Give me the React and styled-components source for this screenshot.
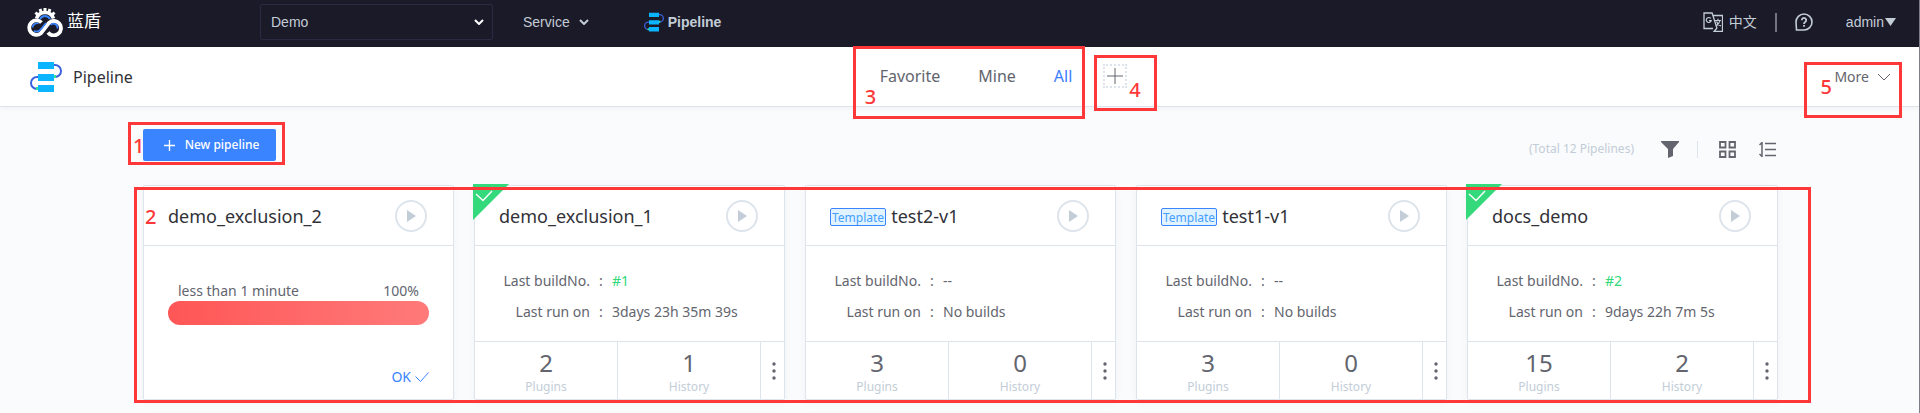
import React from "react";
import styled, { createGlobalStyle } from "styled-components";

const UI = '"Noto Sans", "Noto Sans CJK SC", sans-serif';
const NAV = '"Liberation Sans", "Noto Sans CJK SC", sans-serif';

const GlobalStyle = createGlobalStyle`
  *, *::before, *::after { box-sizing: border-box; }
  body { margin: 0; background: #fafbfd; color: #63656e; font: 14px/20px ${UI}; }
  button, select { font: inherit; color: inherit; background: none; border: 0; padding: 0; cursor: pointer; }
  a { color: inherit; text-decoration: none; }
  svg { display: block; flex: none; }
`;

const Page = styled.div`
  border-right: 1px solid #7c7e88;
  overflow: hidden;
`;

const TopBar = styled.header`
  display: flex;
  align-items: center;
  height: 47px;
  margin-right: -1px;
  padding: 0 24px 3px 27px;
  background: #1b1a29;
  color: #c3cdd7;
  font: 14px/20px ${NAV};
`;

const Brand = styled.a`
  display: flex;
  align-items: center;
  gap: 4px;
  width: 233px;
  color: #fff;
  font-size: 17px;
`;

const ProjectPicker = styled.label`
  display: grid;
  align-items: center;
  width: 233px;
  height: 36px;
  border: 1px solid #2a2a42;
  border-radius: 2px;
  select, svg { grid-area: 1 / 1; }
  svg { justify-self: end; margin-right: 8px; pointer-events: none; color: #fff; }
`;

const ProjectSelect = styled.select`
  appearance: none;
  width: 100%;
  height: 100%;
  padding: 0 10px;
`;

const NavButton = styled.button`
  display: flex;
  align-items: center;
  gap: 9px;
  margin-left: 30px;
`;

const NavLink = styled.a`
  display: flex;
  align-items: center;
  gap: 4px;
  margin-left: 55px;
  font-weight: bold;
`;

const TopTools = styled.div`
  display: flex;
  align-items: center;
  margin-left: auto;
`;

const ToolButton = styled.button`
  display: flex;
  align-items: center;
  gap: ${(p) => p.$gap || 0}px;
`;

const Rule = styled.span`
  width: ${(p) => p.$width || 1}px;
  height: ${(p) => p.$height}px;
  margin: ${(p) => p.$margin};
  background: ${(p) => p.$color};
`;

const SubHeader = styled.div`
  display: grid;
  grid-template-columns: 1fr auto 1fr;
  align-items: center;
  height: 60px;
  padding: 0 28px 0 30px;
  background: #fff;
  border-bottom: 1px solid #dde4eb;
  box-shadow: 0 2px 5px rgba(0, 0, 0, 0.04);
`;

const Title = styled.h1`
  display: flex;
  align-items: center;
  gap: 11px;
  margin: 0;
  color: #313238;
  font-size: 16px;
  font-weight: 400;
`;

const ViewBar = styled.nav`
  display: flex;
  align-items: center;
  gap: 31px;
  padding: 0 0 2px 86px;
`;

const Views = styled.div`
  position: relative;
  display: flex;
  gap: 38px;
  font-size: 16px;
`;

const ViewLink = styled.a`
  color: ${(p) => (p.$active ? "#3c7cff" : "inherit")};
`;

const AddView = styled.button`
  position: relative;
  display: grid;
  place-items: center;
  width: 24px;
  height: 24px;
  border: 2px dotted #dde4eb;
`;

const MoreButton = styled.button`
  position: relative;
  justify-self: end;
  display: flex;
  align-items: center;
  gap: 8px;
`;

const Content = styled.main`
  padding: 22px 141px 13px 143px;
`;

const Toolbar = styled.div`
  display: flex;
  align-items: center;
  justify-content: space-between;
`;

const CreateButton = styled.button`
  position: relative;
  display: flex;
  align-items: center;
  justify-content: center;
  gap: 10px;
  width: 133px;
  height: 32px;
  padding-left: 4px;
  border-radius: 2px;
  background: #3a84ff;
  color: #fff;
  font-size: 12px;
  font-weight: 500;
`;

const ListTools = styled.div`
  display: flex;
  align-items: center;
  padding: 8px 2px 0 0;
`;

const Total = styled.span`
  margin-right: 27px;
  color: #c3cdd7;
  font-size: 12px;
`;

const Cards = styled.div`
  position: relative;
  display: grid;
  grid-template-columns: repeat(auto-fill, 311px);
  gap: 20px;
  margin-top: 24px;
`;

const Card = styled.article`
  position: relative;
  display: flex;
  flex-direction: column;
  height: 215px;
  background: #fff;
  border: 1px solid #dde4eb;
  border-radius: 2px;
  box-shadow: 0 3px 8px rgba(0, 0, 0, 0.04);
`;

const CardHead = styled.div`
  display: flex;
  align-items: center;
  gap: 5px;
  height: 60px;
  padding: 0 26px 0 24px;
  border-bottom: 1px solid #dde4eb;
`;

const CardTitle = styled.h2`
  flex: 1;
  margin: 0;
  color: #313238;
  font-size: 18px;
  line-height: 24px;
  font-weight: 400;
`;

const TemplateTag = styled.span`
  height: 18px;
  margin-top: 2px;
  padding: 0 1px;
  border: 1px solid #3a84ff;
  border-radius: 2px;
  background: #e1f3ff;
  color: #459fff;
  font-size: 12px;
  line-height: 18px;
`;

const PlayButton = styled.button`
  display: grid;
  place-items: center;
  width: 32px;
  height: 32px;
  border: 2px solid #dde4eb;
  border-radius: 50%;
`;

const Corner = styled.span`
  position: absolute;
  top: -2px;
  left: -2px;
`;

const Details = styled.dl`
  flex: 1;
  display: grid;
  grid-template-columns: 115px 1fr;
  align-content: center;
  row-gap: 11px;
  margin: 0;
  padding-top: 5px;
  dt { text-align: right; }
  dd { margin: 0; }
`;

const Value = styled.dd`
  display: flex;
  color: ${(p) => (p.$link ? "#30d878" : "inherit")};
  &::before { content: ":"; width: 22px; padding-left: 9px; color: #63656e; }
`;

const CardFoot = styled.div`
  display: grid;
  grid-template-columns: 1fr 1fr 23px;
  height: 58px;
  border-top: 1px solid #dde4eb;
`;

const Stat = styled.a`
  display: flex;
  flex-direction: column;
  align-items: center;
  padding-top: 7px;
  border-right: 1px solid #dde4eb;
  font-size: 12px;
  line-height: 20px;
  color: #c3cdd7;
  strong { font-size: 24px; line-height: 28px; font-weight: 400; color: #63656e; }
`;

const MenuButton = styled.button`
  display: grid;
  place-items: center;
  padding-left: 2px;
`;

const Running = styled.div`
  flex: 1;
  display: flex;
  flex-direction: column;
  padding: 35px 24px 12px;
`;

const ProgressInfo = styled.div`
  display: flex;
  justify-content: space-between;
  padding: 0 10px;
`;

const Progress = styled.div`
  height: 24px;
  border-radius: 12px;
  background: linear-gradient(90deg, #ff5656, #ff7a7a);
`;

const OkButton = styled.button`
  display: flex;
  align-items: center;
  gap: 4px;
  margin: auto 0 0 auto;
  color: #3a84ff;
`;

const Callout = styled.span`
  position: absolute;
  z-index: 2;
  inset: ${(p) => p.$inset};
  border: 3px solid #fe3838;
  color: #fe3838;
  font: 500 20px/24px ${UI};
  text-align: left;
  pointer-events: none;
`;

const CalloutNumber = styled.span`
  position: absolute;
  inset: ${(p) => p.$inset};
`;

const Mark = ({ n, box, at }) => (
  <Callout $inset={box}>
    <CalloutNumber $inset={at}>{n}</CalloutNumber>
  </Callout>
);

const Logo = () => (
  <svg width="36" height="30" viewBox="0 0 36 30" fill="none" aria-hidden="true">
    <path d="M9.500 11.500a9 9 0 0 1 17 0" stroke="#fff" strokeWidth="3.600" />
    <path d="M8.500 5.500l3 3M13 2l1.500 4M18 1v4M23 2l-1.500 4M27.500 5.500l-3 3" stroke="#fff" strokeWidth="3" />
    <path d="M13 12a5.600 5.600 0 0 1 10 0" stroke="#3a84ff" strokeWidth="2" />
    <path d="M14.500 15.500A7.200 7.200 0 1 0 14 26.200L22 15.800A7.200 7.200 0 1 1 21 25.500" stroke="#fff" strokeWidth="3.800" />
    <path d="M5.500 20.500A4.600 4.600 0 0 1 11.500 16.500M7 23.800C10 26 12.500 24 14.500 21.500L19 16M23.500 18C26.500 15 31 17.500 30.500 21.500" stroke="#3a84ff" strokeWidth="1.700" />
  </svg>
);

const PipelineIcon = ({ size }) => (
  <svg width={size} height={size} viewBox="0 0 32 32" aria-hidden="true">
    <g fill="none" stroke="#3a62e0" strokeWidth="2">
      <path d="M23 4h2a5.500 5.500 0 0 1 0 12h-2M9 16H7a5.500 5.500 0 0 0 0 12h2" />
    </g>
    <path d="M24 14h2v3h-2zM6 26h3v3H6z" fill="#30e890" />
    <path d="M8 1h16v7H8zM8 13h16v7H8zM8 24h16v7H8z" fill="#0ab4ff" />
  </svg>
);

const Chevron = ({ w = 10, h = 6, stroke = 2 }) => (
  <svg width={w} height={h} viewBox={`0 0 ${w} ${h}`} fill="none" stroke="currentColor" strokeWidth={stroke} aria-hidden="true">
    <path d={`M1 1L${w / 2} ${h - 1}L${w - 1} 1`} />
  </svg>
);

const LanguageIcon = () => (
  <svg width="20" height="20" viewBox="0 0 20 20" fill="none" stroke="currentColor" aria-hidden="true">
    <path d="M9.500 1H1v15.500h9M9 .8l5 15.500M10 3.500h9.500V19.500H11l3-3.500" strokeWidth="1.300" />
    <path d="M7.800 6.500a2.500 2.500 0 1 0 .4 2.200H6M12 8.500h6M15 6.800v1.700M17 8.500c-.5 2.500-2 4-4 5.500M13.500 9.500c.7 2 2 3.500 4.500 4.500" strokeWidth="1.200" />
  </svg>
);

const HelpIcon = () => (
  <svg width="18" height="18" viewBox="0 0 18 18" fill="none" stroke="currentColor" aria-hidden="true">
    <path d="M1 9a8 8 0 1 1 8 8H1.500z" strokeWidth="1.600" />
    <path d="M6.800 7.200a2.200 2.200 0 1 1 3.400 1.800c-.8.5-1.200.9-1.200 1.900M9 12v1.800" strokeWidth="1.800" />
  </svg>
);

const FilterIcon = () => (
  <svg width="18" height="17" viewBox="0 0 18 17" aria-hidden="true">
    <path d="M0 0h18v1l-6 7v7l-5 2V8L0 1z" fill="#63656e" />
  </svg>
);

const GridIcon = () => (
  <svg width="17" height="17" viewBox="0 0 17 17" fill="none" stroke="#63656e" strokeWidth="1.800" aria-hidden="true">
    <path d="M1 1h5.500v5.500H1zM10.500 1H16v5.500h-5.500zM1 10.500h5.500V16H1zM10.500 10.500H16V16h-5.500z" />
  </svg>
);

const SortIcon = () => (
  <svg width="17" height="17" viewBox="0 0 17 17" fill="none" stroke="#63656e" strokeWidth="1.500" aria-hidden="true">
    <path d="M3 1v15M.500 4L3 1.500M.500 13L3 15.500M6 2.500h11M6 8.500h11M6 14.500h11" />
  </svg>
);

const CheckIcon = ({ w = 14, h = 10, color = "currentColor" }) => (
  <svg width={w} height={h} viewBox="0 0 14 10" fill="none" stroke={color} aria-hidden="true">
    <path d="M.500 4.500l5 5L13.500.500" />
  </svg>
);

const PlusIcon = ({ size, stroke = 1 }) => (
  <svg width={size} height={size} viewBox="0 0 16 16" fill="none" stroke="currentColor" strokeWidth={stroke} aria-hidden="true">
    <path d="M8 0v16M0 8h16" />
  </svg>
);

const pipelines = [
  { name: "demo_exclusion_2", running: true },
  { name: "demo_exclusion_1", ok: true, build: "#1", last: "3days 23h 35m 39s", plugins: 2, history: 1 },
  { name: "test2-v1", template: true, build: "--", last: "No builds", plugins: 3, history: 0 },
  { name: "test1-v1", template: true, build: "--", last: "No builds", plugins: 3, history: 0 },
  { name: "docs_demo", ok: true, build: "#2", last: "9days 22h 7m 5s", plugins: 15, history: 2 },
];

const PipelineCard = ({ p }) => (
  <Card>
    {p.ok && (
      <Corner>
        <svg width="36" height="36" viewBox="0 0 36 36" aria-hidden="true">
          <path d="M0 0h36L0 36z" fill="#34d97b" />
          <path d="M3 10l7 6.500L19 7" fill="none" stroke="#fff" strokeWidth="1.400" />
        </svg>
      </Corner>
    )}
    <CardHead>
      {p.template && <TemplateTag>Template</TemplateTag>}
      <CardTitle>{p.name}</CardTitle>
      <PlayButton aria-label={`Run ${p.name}`}>
        <svg width="9" height="12" viewBox="0 0 9 12" aria-hidden="true"><path d="M0 0l9 6-9 6z" fill="#c3cdd7" /></svg>
      </PlayButton>
    </CardHead>
    {p.running ? (
      <Running>
        <ProgressInfo><span>less than 1 minute</span><span>100%</span></ProgressInfo>
        <Progress role="progressbar" aria-valuenow={100} aria-label="Build progress" />
        <OkButton>OK <CheckIcon /></OkButton>
      </Running>
    ) : (
      <>
        <Details>
          <dt>Last buildNo.</dt><Value $link={p.build !== "--"}>{p.build}</Value>
          <dt>Last run on</dt><Value>{p.last}</Value>
        </Details>
        <CardFoot>
          <Stat href="#plugins"><strong>{p.plugins}</strong>Plugins</Stat>
          <Stat href="#history"><strong>{p.history}</strong>History</Stat>
          <MenuButton aria-label="Pipeline menu">
            <svg width="4" height="18" viewBox="0 0 4 18" fill="#63656e" aria-hidden="true">
              <circle cx="2" cy="2" r="1.700" /><circle cx="2" cy="9" r="1.700" /><circle cx="2" cy="16" r="1.700" />
            </svg>
          </MenuButton>
        </CardFoot>
      </>
    )}
  </Card>
);

export default function App() {
  return (
    <Page>
      <GlobalStyle />
      <TopBar>
        <Brand href="#home"><Logo />蓝盾</Brand>
        <ProjectPicker>
          <ProjectSelect aria-label="Project"><option>Demo</option></ProjectSelect>
          <Chevron />
        </ProjectPicker>
        <NavButton>Service <Chevron /></NavButton>
        <NavLink href="#pipeline"><PipelineIcon size={20} />Pipeline</NavLink>
        <TopTools>
          <ToolButton $gap={6}><LanguageIcon />中文</ToolButton>
          <Rule $height={19} $margin="0 18px" $color="#73757f" $width={2} />
          <ToolButton aria-label="Help"><HelpIcon /></ToolButton>
          <Rule $height={0} $margin="0 16px" $color="transparent" />
          <ToolButton $gap={1}>
            admin
            <svg width="11" height="8" viewBox="0 0 11 8" aria-hidden="true"><path d="M0 0h11L5.500 8z" fill="currentColor" /></svg>
          </ToolButton>
        </TopTools>
      </TopBar>
      <SubHeader>
        <Title><PipelineIcon size={32} />Pipeline</Title>
        <ViewBar>
          <Views>
            <ViewLink href="#favorite">Favorite</ViewLink>
            <ViewLink href="#mine">Mine</ViewLink>
            <ViewLink href="#all" $active>All</ViewLink>
            <Mark n="3" box="-20px -13px -33px -27px" at="36px auto auto 9px" />
          </Views>
          <AddView aria-label="Add view">
            <PlusIcon size={16} />
            <Mark n="4" box="-11px -32px -25px -11px" at="20px auto auto 32px" />
          </AddView>
        </ViewBar>
        <MoreButton>
          More <Chevron w={14} h={8} stroke={1} />
          <Mark n="5" box="-5px -11px -31px -30px" at="10px auto auto 13px" />
        </MoreButton>
      </SubHeader>
      <Content>
        <Toolbar>
          <CreateButton>
            <PlusIcon size={11} stroke={2} />New pipeline
            <Mark n="1" box="-7px -9px -4px -15px" at="9px auto auto 2px" />
          </CreateButton>
          <ListTools>
            <Total>(Total 12 Pipelines)</Total>
            <ToolButton aria-label="Filter"><FilterIcon /></ToolButton>
            <Rule $height={17} $margin="0 21px 0 18px" $color="#dde4eb" />
            <ToolButton aria-label="Card view"><GridIcon /></ToolButton>
            <Rule $height={0} $margin="0 11px" $color="transparent" />
            <ToolButton aria-label="Sort"><SortIcon /></ToolButton>
          </ListTools>
        </Toolbar>
        <Cards>
          {pipelines.map((p) => <PipelineCard key={p.name} p={p} />)}
          <Mark n="2" box="2px -33px -3px -9px" at="15px auto auto 8px" />
        </Cards>
      </Content>
    </Page>
  );
}
